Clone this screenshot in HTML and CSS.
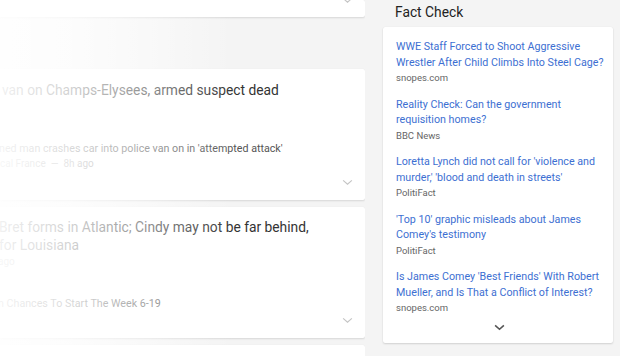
FILE: index.html
```html
<!DOCTYPE html>
<html>
<head>
<meta charset="utf-8">
<link rel="stylesheet" href="styles.css">
</head>
<body>
<div class="page">
  <div class="main">
    <div class="card card-top">
      <svg class="chev chev-top" viewBox="0 0 12 8"><path d="M1 1.5 L6 6 L11 1.5"/></svg>
    </div>
    <div class="card card-story">
      <div class="title t1">van on Champs-Elysees, armed suspect dead</div>
      <div class="snippet s1">ned man crashes car into police van on in 'attempted attack'</div>
      <div class="meta m1">cal France &nbsp;—&nbsp; 8h ago</div>
      <svg class="chev" viewBox="0 0 12 8"><path d="M1 1.5 L6 6 L11 1.5"/></svg>
    </div>
    <div class="card card-story card-b">
      <div class="title t2">Bret forms in Atlantic; Cindy may not be far behind,<br>for Louisiana</div>
      <div class="meta m2">ago</div>
      <div class="snippet s2">n Chances To Start The Week 6-19</div>
      <svg class="chev" viewBox="0 0 12 8"><path d="M1 1.5 L6 6 L11 1.5"/></svg>
    </div>
    <div class="card card-next"></div>
    <div class="fade"></div>
  </div>
  <div class="side">
    <h2 class="side-title">Fact Check</h2>
    <div class="fc-card">
      <div class="fc-item">
        <a class="fc-link">WWE Staff Forced to Shoot Aggressive Wrestler After Child Climbs Into Steel Cage?</a>
        <div class="fc-src">snopes.com</div>
      </div>
      <div class="fc-item">
        <a class="fc-link">Reality Check: Can the government requisition homes?</a>
        <div class="fc-src">BBC News</div>
      </div>
      <div class="fc-item">
        <a class="fc-link">Loretta Lynch did not call for 'violence and murder,' 'blood and death in streets'</a>
        <div class="fc-src">PolitiFact</div>
      </div>
      <div class="fc-item">
        <a class="fc-link">'Top 10' graphic misleads about James Comey's testimony</a>
        <div class="fc-src">PolitiFact</div>
      </div>
      <div class="fc-item">
        <a class="fc-link">Is James Comey 'Best Friends' With Robert Mueller, and Is That a Conflict of Interest?</a>
        <div class="fc-src">snopes.com</div>
      </div>
      <div class="fc-more">
        <svg class="chev-dark" viewBox="0 0 12 8"><path d="M1 1.5 L6 6 L11 1.5"/></svg>
      </div>
    </div>
  </div>
</div>
</body>
</html>
```

FILE: styles.css
```css
html, body {
  margin: 0;
  padding: 0;
  background: #f4f4f4;
  font-family: Roboto, "Liberation Sans", Arial, sans-serif;
  width: 620px;
  height: 356px;
  overflow: hidden;
}

.page {
  display: flex;
  gap: 18px;
  height: 356px;
}

.main {
  position: relative;
  width: 365px;
  flex: none;
  display: flex;
  flex-direction: column;
  overflow: hidden;
}

.card {
  background: #fff;
  box-shadow: 0 1px 2px rgba(0, 0, 0, 0.12), 0 0 1px rgba(0, 0, 0, 0.06);
  border-radius: 0 2px 2px 0;
  position: relative;
  flex: none;
}

.card-top {
  height: 17px;
  margin-bottom: 52px;
}

.card-story {
  height: 131px;
  margin-bottom: 7px;
  color: #222;
}

.card-next {
  height: 20px;
}

.chev {
  position: absolute;
  right: 12px;
  bottom: 14px;
  width: 11px;
  height: 7px;
  fill: none;
  stroke: #c4c4c4;
  stroke-width: 1.3;
}

.chev-top {
  bottom: 13px;
}

.title {
  font-size: 13.8px;
  line-height: 18px;
  color: #333;
  white-space: nowrap;
}

.t1 {
  padding-top: 12px;
  margin-left: 2px;
}

.t2 {
  padding-top: 11px;
  margin-left: -1px;
}

.snippet {
  font-size: 10.7px;
  line-height: 15px;
  color: #555;
  white-space: nowrap;
}

.meta {
  font-size: 10px;
  line-height: 15px;
  color: #8a8a8a;
}

.s1 {
  margin-top: 42px;
  margin-left: -1px;
}

.m1 {
  margin-left: 0;
}

.m2 {
  margin-left: -2px;
}

.s2 {
  margin-top: 27px;
  margin-left: -2px;
}

.fade {
  position: absolute;
  left: 0;
  top: 0;
  width: 260px;
  height: 100%;
  background: linear-gradient(to right, rgba(255, 255, 255, 0.93) 0px, rgba(255, 255, 255, 0.78) 70px, rgba(255, 255, 255, 0.45) 150px, rgba(255, 255, 255, 0) 235px);
  pointer-events: none;
}

.side {
  width: 230px;
  flex: none;
  display: flex;
  flex-direction: column;
}

.side-title {
  margin: 0;
  font-size: 13.8px;
  font-weight: 400;
  line-height: 25px;
  height: 25px;
  color: #222;
  padding-left: 12px;
  margin-bottom: 2px;
}

.fc-card {
  background: #fff;
  box-shadow: 0 1px 2px rgba(0, 0, 0, 0.14), 0 0 1px rgba(0, 0, 0, 0.08);
  border-radius: 2px;
  padding: 12px 8px 0 13px;
  height: 316px;
  box-sizing: border-box;
  display: flex;
  flex-direction: column;
  gap: 11px;
}

.fc-item {
  display: flex;
  flex-direction: column;
}

.fc-link {
  font-size: 10.7px;
  line-height: 15.5px;
  color: #3d6fd2;
  text-decoration: none;
}

.fc-src {
  font-size: 9.5px;
  line-height: 15.5px;
  color: #666;
}

.fc-more {
  display: flex;
  justify-content: center;
  margin-top: -3px;
  padding-right: 3px;
}

.chev-dark {
  width: 11px;
  height: 7px;
  fill: none;
  stroke: #555;
  stroke-width: 1.8;
}
```
